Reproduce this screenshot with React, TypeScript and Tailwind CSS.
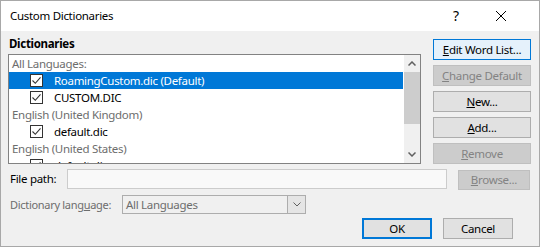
import React from 'react';

const font = { fontFamily: '"Noto Sans", "Open Sans", Arial, sans-serif' };

function Check() {
  return (
    <span className="w-[13px] h-[13px] border border-[#333333] bg-white flex items-center justify-center shrink-0">
      <svg width="9" height="9" viewBox="0 0 9 9">
        <path d="M0.5 4.5 L3.3 7.3 L8.5 1.3" fill="none" stroke="#333333" strokeWidth="1.1" />
      </svg>
    </span>
  );
}

function Header({ children }: { children: React.ReactNode }) {
  return <div className="h-[17px] shrink-0 flex items-center pl-[3px] text-[#6d6d6d]">{children}</div>;
}

function Item({ children, selected }: { children: React.ReactNode; selected?: boolean }) {
  return (
    <div className={`h-[17px] shrink-0 flex items-center pl-[21px] ${selected ? 'bg-[#0078d7] text-white' : 'text-black'}`}>
      <Check />
      <span className="ml-[11px]">{children}</span>
    </div>
  );
}

function Btn({ children, disabled, primary }: { children: React.ReactNode; disabled?: boolean; primary?: boolean }) {
  const cls = primary
    ? 'border-[#0078d7] bg-[#e5f1fb] text-black'
    : disabled
      ? 'border-[#bfbfbf] bg-[#cccccc] text-[#838383]'
      : 'border-[#adadad] bg-[#e1e1e1] text-black';
  return (
    <div className={`h-[21px] w-[98px] border flex items-center justify-center ${cls}`}>{children}</div>
  );
}

export default function App() {
  return (
    <div className="w-[540px] h-[247px] border border-[#a8a8a8] bg-[#f0f0f0] flex flex-col text-[11.5px] tracking-[-0.3px] leading-[16px] overflow-hidden" style={font}>
      {/* title bar */}
      <div className="h-[30px] bg-white flex items-center pl-[9px] shrink-0">
        <span className="text-black">Custom Dictionaries</span>
        <span className="ml-auto w-[20px] text-center text-[14px] mr-[29px]">?</span>
        <svg width="12" height="12" viewBox="0 0 12 12" className="mr-[32px]">
          <path d="M1 1 L11 11 M11 1 L1 11" stroke="#000" strokeWidth="1" />
        </svg>
      </div>

      <div className="flex pl-[7px] pr-[8px]">
        <div className="w-[413px] flex flex-col">
          <div className="h-[23px] pt-[5px] pl-[1px] font-bold">Dictionaries</div>
          <div className="h-[110px] border border-[#828282] bg-white flex">
            <div className="flex-1 flex flex-col overflow-hidden">
              <Header>All Languages:</Header>
              <Item selected>RoamingCustom.dic (Default)</Item>
              <Item>CUSTOM.DIC</Item>
              <Header>English (United Kingdom)</Header>
              <Item>default.dic</Item>
              <Header>English (United States)</Header>
              <Item>default.dic</Item>
            </div>
            <div className="w-[16px] bg-[#f0f0f0] flex flex-col ml-[1px]">
              <div className="h-[17px] flex items-center justify-center">
                <svg width="8" height="5" viewBox="0 0 8 5"><path d="M0.5 4.5 L4 1 L7.5 4.5" fill="none" stroke="#606060" strokeWidth="1.5" /></svg>
              </div>
              <div className="h-[52px] bg-[#cdcdcd]" />
              <div className="flex-1" />
              <div className="h-[17px] flex items-center justify-center">
                <svg width="8" height="5" viewBox="0 0 8 5"><path d="M0.5 0.5 L4 4 L7.5 0.5" fill="none" stroke="#606060" strokeWidth="1.5" /></svg>
              </div>
            </div>
          </div>
        </div>
        <div className="ml-[12px] pt-[8px] flex flex-col gap-[5px]">
          <Btn primary><span><span className="underline">E</span>dit Word List...</span></Btn>
          <Btn disabled><span><span className="underline">C</span>hange Default</span></Btn>
          <Btn><span><span className="underline">N</span>ew...</span></Btn>
          <Btn><span><span className="underline">A</span>dd...</span></Btn>
          <Btn disabled><span><span className="underline">R</span>emove</span></Btn>
        </div>
      </div>

      <div className="flex items-center mt-[4px] pl-[9px]">
        <span className="w-[57px]">File path:</span>
        <div className="w-[380px] h-[20px] border border-[#cccccc] bg-[#f9f9f9]" />
        <div className="ml-[11px] mt-[2px] h-[20px] w-[72px] border border-[#bfbfbf] bg-[#cccccc] text-[#838383] flex items-center justify-center">
          <span><span className="underline">B</span>rowse...</span>
        </div>
      </div>

      <div className="flex items-center mt-[5px] pl-[9px]">
        <span className="w-[112px] text-[11px] text-[#6d6d6d] whitespace-nowrap">Dictionary lang<span className="underline">u</span>age:</span>
        <div className="w-[184px] h-[19px] border border-[#adadad] bg-[#f0f0f0] flex">
          <span className="flex-1 pl-[3px] text-[#6d6d6d] leading-[17px]">All Languages</span>
          <div className="w-[18px] border-l border-[#adadad] bg-[#e5e5e5] flex items-center justify-center">
            <svg width="8" height="5" viewBox="0 0 8 5"><path d="M0.5 0.5 L4 4 L7.5 0.5" fill="none" stroke="#606060" strokeWidth="1" /></svg>
          </div>
        </div>
      </div>

      <div className="flex justify-end mt-[4px] pr-[26px] gap-[11px]">
        <div className="w-[70px] h-[21px] border-2 border-[#0078d7] bg-[#e1e1e1] flex items-center justify-center">OK</div>
        <div className="w-[70px] h-[21px] border border-[#adadad] bg-[#e1e1e1] flex items-center justify-center">Cancel</div>
      </div>
    </div>
  );
}
